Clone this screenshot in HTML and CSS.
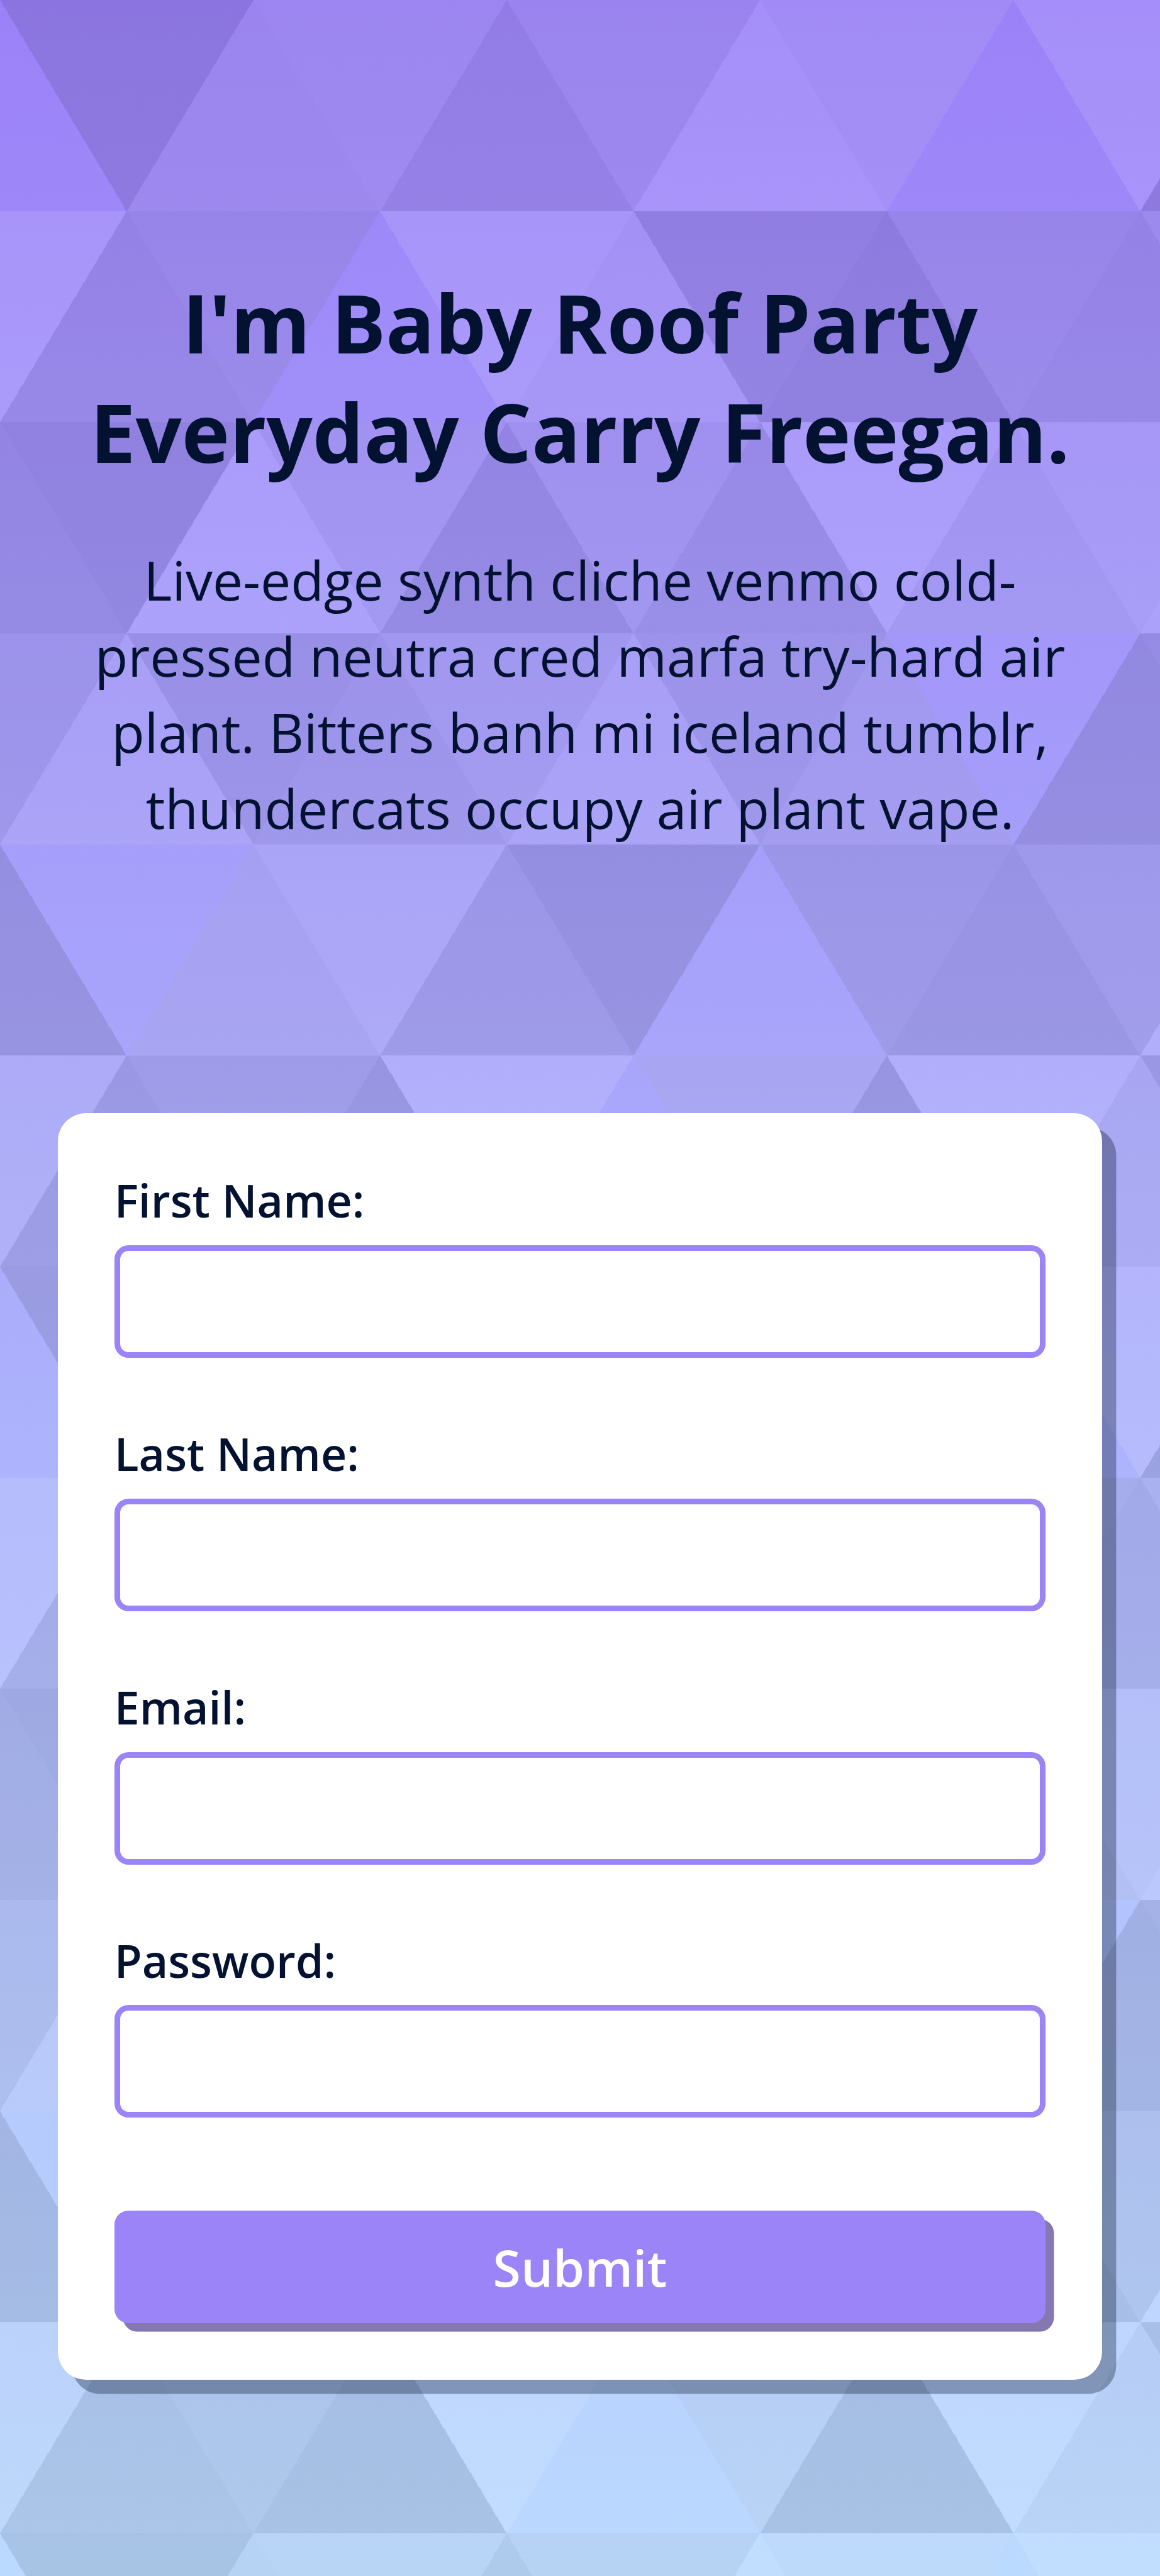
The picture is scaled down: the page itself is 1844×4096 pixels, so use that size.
FILE: index.html
```html
<!DOCTYPE html>
<html lang="en">
<head>
<meta charset="utf-8">
<meta name="viewport" content="width=device-width, initial-scale=1">
<title>Sign up</title>
<link rel="stylesheet" href="styles.css">
</head>
<body>
<main class="page">
  <header class="intro">
    <h1 class="title">I'm Baby Roof Party Everyday Carry Freegan.</h1>
    <p class="lead">Live-edge synth cliche venmo cold-pressed neutra cred marfa try-hard air plant. Bitters banh mi iceland tumblr, thundercats occupy air plant vape.</p>
  </header>
  <form class="card">
    <div class="field">
      <label class="label" for="first-name">First Name:</label>
      <input class="input" type="text" id="first-name">
    </div>
    <div class="field">
      <label class="label" for="last-name">Last Name:</label>
      <input class="input" type="text" id="last-name">
    </div>
    <div class="field">
      <label class="label" for="email">Email:</label>
      <input class="input" type="email" id="email">
    </div>
    <div class="field">
      <label class="label" for="password">Password:</label>
      <input class="input" type="password" id="password">
    </div>
    <button class="submit" type="button">Submit</button>
  </form>
</main>
</body>
</html>
```

FILE: styles.css
```css
*,
*::before,
*::after {
  box-sizing: border-box;
}

html {
  font-size: 44.7573px;
}

body {
  margin: 0;
  font-family: "Open Sans", "Noto Sans", sans-serif;
  color: #031230;
  background-color: #9b83f8;
  background-image:
    url("data:image/svg+xml,%3Csvg xmlns='http://www.w3.org/2000/svg' width='1080' height='900' viewBox='0 0 1080 900'%3E%3Cg fill-opacity='0.1'%3E%3Cpolygon fill='%23444' points='90 150 0 300 180 300'/%3E%3Cpolygon points='90 150 180 0 0 0'/%3E%3Cpolygon fill='%23AAA' points='270 150 360 0 180 0'/%3E%3Cpolygon fill='%23DDD' points='450 150 360 300 540 300'/%3E%3Cpolygon fill='%23999' points='450 150 540 0 360 0'/%3E%3Cpolygon points='630 150 540 300 720 300'/%3E%3Cpolygon fill='%23DDD' points='630 150 720 0 540 0'/%3E%3Cpolygon fill='%23444' points='810 150 720 300 900 300'/%3E%3Cpolygon fill='%23FFF' points='810 150 900 0 720 0'/%3E%3Cpolygon fill='%23DDD' points='990 150 900 300 1080 300'/%3E%3Cpolygon fill='%23444' points='990 150 1080 0 900 0'/%3E%3Cpolygon fill='%23DDD' points='90 450 0 600 180 600'/%3E%3Cpolygon points='90 450 180 300 0 300'/%3E%3Cpolygon fill='%23666' points='270 450 180 600 360 600'/%3E%3Cpolygon fill='%23AAA' points='270 450 360 300 180 300'/%3E%3Cpolygon fill='%23DDD' points='450 450 360 600 540 600'/%3E%3Cpolygon fill='%23999' points='450 450 540 300 360 300'/%3E%3Cpolygon fill='%23999' points='630 450 540 600 720 600'/%3E%3Cpolygon fill='%23FFF' points='630 450 720 300 540 300'/%3E%3Cpolygon points='810 450 720 600 900 600'/%3E%3Cpolygon fill='%23DDD' points='810 450 900 300 720 300'/%3E%3Cpolygon fill='%23AAA' points='990 450 900 600 1080 600'/%3E%3Cpolygon fill='%23444' points='990 450 1080 300 900 300'/%3E%3Cpolygon fill='%23222' points='90 750 0 900 180 900'/%3E%3Cpolygon points='270 750 180 900 360 900'/%3E%3Cpolygon fill='%23DDD' points='270 750 360 600 180 600'/%3E%3Cpolygon points='450 750 540 600 360 600'/%3E%3Cpolygon points='630 750 540 900 720 900'/%3E%3Cpolygon fill='%23444' points='630 750 720 600 540 600'/%3E%3Cpolygon fill='%23AAA' points='810 750 720 900 900 900'/%3E%3Cpolygon fill='%23666' points='810 750 900 600 720 600'/%3E%3Cpolygon fill='%23999' points='990 750 900 900 1080 900'/%3E%3Cpolygon fill='%23999' points='180 0 90 150 270 150'/%3E%3Cpolygon fill='%23444' points='360 0 270 150 450 150'/%3E%3Cpolygon fill='%23FFF' points='540 0 450 150 630 150'/%3E%3Cpolygon points='900 0 810 150 990 150'/%3E%3Cpolygon fill='%23222' points='0 300 -90 450 90 450'/%3E%3Cpolygon fill='%23FFF' points='0 300 90 150 -90 150'/%3E%3Cpolygon fill='%23FFF' points='180 300 90 450 270 450'/%3E%3Cpolygon fill='%23666' points='180 300 270 150 90 150'/%3E%3Cpolygon fill='%23222' points='360 300 270 450 450 450'/%3E%3Cpolygon fill='%23FFF' points='360 300 450 150 270 150'/%3E%3Cpolygon fill='%23444' points='540 300 450 450 630 450'/%3E%3Cpolygon fill='%23222' points='540 300 630 150 450 150'/%3E%3Cpolygon fill='%23AAA' points='720 300 630 450 810 450'/%3E%3Cpolygon fill='%23666' points='720 300 810 150 630 150'/%3E%3Cpolygon fill='%23FFF' points='900 300 810 450 990 450'/%3E%3Cpolygon fill='%23999' points='900 300 990 150 810 150'/%3E%3Cpolygon points='0 600 -90 750 90 750'/%3E%3Cpolygon fill='%23666' points='0 600 90 450 -90 450'/%3E%3Cpolygon fill='%23AAA' points='180 600 90 750 270 750'/%3E%3Cpolygon fill='%23444' points='180 600 270 450 90 450'/%3E%3Cpolygon fill='%23444' points='360 600 270 750 450 750'/%3E%3Cpolygon fill='%23999' points='360 600 450 450 270 450'/%3E%3Cpolygon fill='%23666' points='540 600 630 450 450 450'/%3E%3Cpolygon fill='%23222' points='720 600 630 750 810 750'/%3E%3Cpolygon fill='%23FFF' points='900 600 810 750 990 750'/%3E%3Cpolygon fill='%23222' points='900 600 990 450 810 450'/%3E%3Cpolygon fill='%23DDD' points='0 900 90 750 -90 750'/%3E%3Cpolygon fill='%23444' points='180 900 270 750 90 750'/%3E%3Cpolygon fill='%23FFF' points='360 900 450 750 270 750'/%3E%3Cpolygon fill='%23AAA' points='540 900 630 750 450 750'/%3E%3Cpolygon fill='%23FFF' points='720 900 810 750 630 750'/%3E%3Cpolygon fill='%23222' points='900 900 990 750 810 750'/%3E%3Cpolygon fill='%23222' points='1080 300 990 450 1170 450'/%3E%3Cpolygon fill='%23FFF' points='1080 300 1170 150 990 150'/%3E%3Cpolygon points='1080 600 990 750 1170 750'/%3E%3Cpolygon fill='%23666' points='1080 600 1170 450 990 450'/%3E%3Cpolygon fill='%23DDD' points='1080 900 1170 750 990 750'/%3E%3C/g%3E%3C/svg%3E"),
    linear-gradient(#9b81f8, #bbdaff);
  background-size: 54rem 45rem, 100% 100%;
}

.page {
  min-height: 100vh;
  display: flex;
  flex-direction: column;
  align-items: center;
  padding-top: 9.49rem;
}

.intro {
  width: 90%;
  text-align: center;
}

.title {
  margin: 0 0 1.98rem;
  font-size: 2.88rem;
  font-weight: 700;
  line-height: 3.9rem;
}

.lead {
  margin: 0 0 9.47rem;
  padding: 0 1rem;
  font-size: 1.92rem;
  line-height: 2.7rem;
}

.card {
  width: 90%;
  display: flex;
  flex-direction: column;
  gap: 2.3rem;
  padding: 2rem;
  background: #fff;
  border-radius: 1rem;
  box-shadow: 0.5rem 0.5rem 0 rgba(12, 26, 52, 0.35);
}

.field {
  display: flex;
  flex-direction: column;
  gap: 0.5rem;
}

.label {
  font-size: 1.6rem;
  font-weight: 600;
  line-height: 2.2rem;
}

.input {
  width: 100%;
  height: 4rem;
  padding: 0 1rem;
  font: inherit;
  font-size: 1.6rem;
  color: inherit;
  background: #fff;
  border: 9px solid #9b83f8;
  border-radius: 0.5rem;
  outline: none;
}

.submit {
  height: 4rem;
  margin-top: 1rem;
  padding: 0;
  font: inherit;
  font-size: 1.8rem;
  font-weight: 600;
  color: #fff;
  background: #9b83f8;
  border: 0;
  border-radius: 0.5rem;
  box-shadow: 0.3rem 0.3rem 0 #8577b0;
}
```
